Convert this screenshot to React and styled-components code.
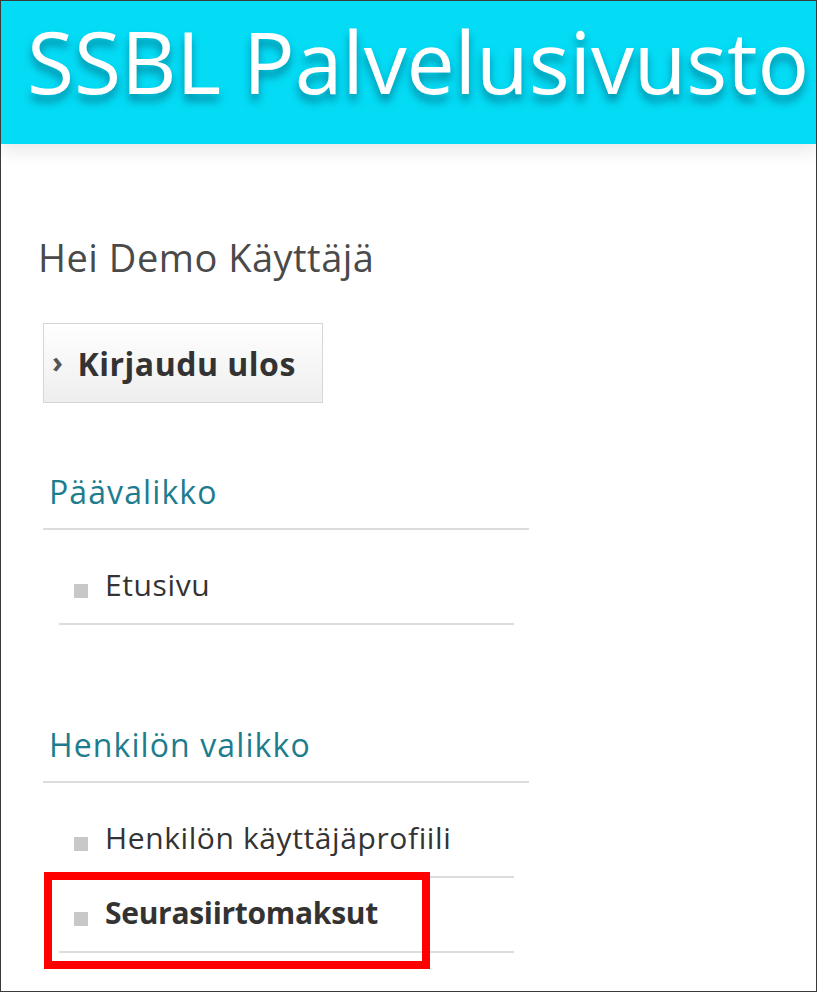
import React from "react";
import styled, { createGlobalStyle } from "styled-components";

const GlobalStyle = createGlobalStyle`
  html, body {
    margin: 0;
    padding: 0;
    background: #ffffff;
  }
  body {
    font-family: "Open Sans", "Noto Sans", sans-serif;
  }
  * {
    box-sizing: border-box;
  }
`;

const mainMenu = [{ label: "Etusivu" }];

const personMenu = [
  { label: "Henkilön käyttäjäprofiili" },
  { label: "Seurasiirtomaksut", active: true, marked: true },
];

const App = () => {
  return (
    <Frame>
      <GlobalStyle />
      <Header>
        <Title>SSBL Palvelusivusto</Title>
      </Header>
      <Content>
        <Greeting>Hei Demo Käyttäjä</Greeting>
        <LogoutButton type="button">
          <Chevron>›</Chevron>
          Kirjaudu ulos
        </LogoutButton>

        <MenuSection>
          <MenuTitle>Päävalikko</MenuTitle>
          <MenuList>
            {mainMenu.map((item) => (
              <MenuItem key={item.label} $active={item.active}>
                <Bullet />
                {item.label}
              </MenuItem>
            ))}
          </MenuList>
        </MenuSection>

        <MenuSection $gap>
          <MenuTitle>Henkilön valikko</MenuTitle>
          <MenuList>
            {personMenu.map((item) => (
              <MenuItem key={item.label} $active={item.active}>
                <Bullet />
                {item.label}
                {item.marked && <Highlight />}
              </MenuItem>
            ))}
          </MenuList>
        </MenuSection>
      </Content>
    </Frame>
  );
};

export default App;

const Frame = styled.div`
  width: 817px;
  height: 992px;
  border: 1px solid #3a3a3a;
  overflow: hidden;
  background: #ffffff;
`;

const Header = styled.header`
  height: 143px;
  background: #04dcf6;
  box-shadow: 0 6px 18px rgba(0, 0, 0, 0.1);
  padding: 0 0 0 26px;
  display: flex;
  align-items: flex-start;
`;

const Title = styled.h1`
  margin: 0;
  padding-top: 5px;
  font-size: 86px;
  line-height: 110px;
  font-weight: 400;
  letter-spacing: -0.2px;
  color: #ffffff;
  white-space: nowrap;
  text-shadow: 0 7px 9px rgba(0, 60, 80, 0.5);
`;

const Content = styled.main`
  padding: 89px 0 0 37px;
`;

const Greeting = styled.p`
  margin: 0;
  font-size: 38px;
  line-height: 48px;
  letter-spacing: 0.5px;
  color: #4a4a4a;
`;

const LogoutButton = styled.button`
  display: flex;
  align-items: center;
  margin: 42px 0 0 5px;
  width: 280px;
  height: 80px;
  padding: 0 0 0 8px;
  border: 1px solid #d6d6d6;
  background: linear-gradient(#ffffff, #eeeeee);
  font-family: "Open Sans", "Noto Sans", sans-serif;
  font-size: 32px;
  font-weight: 700;
  letter-spacing: 0.5px;
  color: #333333;
  cursor: pointer;
`;

const Chevron = styled.span`
  margin-right: 14px;
  font-size: 30px;
  font-weight: 700;
  color: #555555;
  position: relative;
  top: -2px;
`;

const MenuSection = styled.section`
  width: 486px;
  margin: ${(p) => (p.$gap ? "84px" : "53px")} 0 0 5px;
`;

const MenuTitle = styled.h2`
  margin: 0;
  padding: 16px 0 16px 6px;
  font-size: 32px;
  line-height: 40px;
  font-weight: 400;
  letter-spacing: 1.1px;
  color: #1d7d8e;
  border-bottom: 2px solid #dcdcdc;
`;

const MenuList = styled.ul`
  list-style: none;
  margin: 0 0 0 16px;
  padding: 20px 0 0 0;
  width: 455px;
`;

const MenuItem = styled.li`
  position: relative;
  display: flex;
  align-items: center;
  padding: 15px 0 18px 15px;
  font-size: 30px;
  line-height: 40px;
  font-weight: ${(p) => (p.$active ? 700 : 400)};
  letter-spacing: ${(p) => (p.$active ? "-0.3px" : "0.6px")};
  color: #333333;
  border-bottom: 2px solid #dcdcdc;
`;

const Bullet = styled.span`
  width: 14px;
  height: 14px;
  margin: 12px 17px 0 0;
  background: #c8c8c8;
  flex-shrink: 0;
`;

const Highlight = styled.span`
  position: absolute;
  left: -15px;
  top: -6px;
  width: 386px;
  height: 97px;
  border: 8px solid #ff0000;
  pointer-events: none;
`;
